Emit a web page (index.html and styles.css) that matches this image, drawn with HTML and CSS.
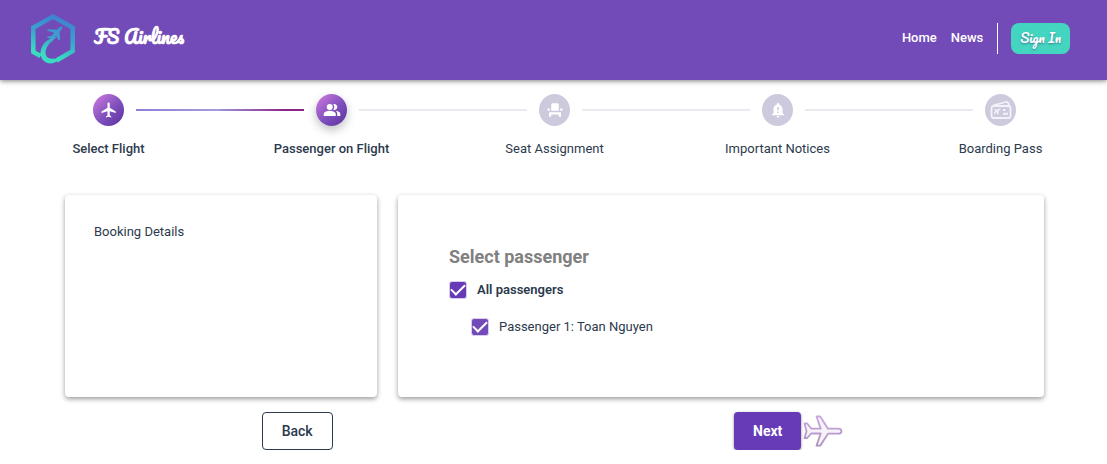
FILE: index.html
```html
<!DOCTYPE html>
<html lang="en">
<head>
<meta charset="utf-8">
<meta name="viewport" content="width=device-width, initial-scale=1">
<title>FS Airlines</title>
<link rel="stylesheet" href="styles.css">
</head>
<body>
<header class="topbar">
  <a class="brand" href="#">
    <svg class="logo" viewBox="0 0 46 52" aria-hidden="true">
      <defs>
        <linearGradient id="logo-fill" gradientUnits="userSpaceOnUse" x1="34" y1="0" x2="18" y2="50">
          <stop offset="0" stop-color="#3f78d4"/>
          <stop offset="0.5" stop-color="#3aa6cc"/>
          <stop offset="0.85" stop-color="#38dcc0"/>
        </linearGradient>
      </defs>
      <path fill="none" stroke="url(#logo-fill)" stroke-width="4.500" d="M10.500 43 3.300 39V14.500L23 3.500l19.700 11V38L26.500 47.500"/>
      <path fill="url(#logo-fill)" d="M29.500 22.500C22 26.500 16 33 15.500 39c-.3 5 3.500 7.500 9 6.500l4 1.500c-4 4-10 4.500-14 1.500-4-3-5-8-3-13.500 2.500-6.500 9-11 18-12.500z"/>
      <path fill="url(#logo-fill)" d="M32 13.500c.8.700.3 2.300-.6 3.300l-1.800 2 .4 7.700-1.300 1-2.300-5.500-3.700 3.300.2 3-1 .7-1.200-3.500-3.700-1.300.9-1 3 .2 3.400-3.600-7.300-2.300 1-1.200 9 .5 2-2c1-1 2.400-1.700 3-1.300z"/>
    </svg>
    <span class="brand-name">FS Airlines</span>
  </a>
  <nav class="nav">
    <a class="nav-link" href="#">Home</a>
    <a class="nav-link" href="#">News</a>
    <span class="divider"></span>
    <button class="sign-in" type="button">Sign In</button>
  </nav>
</header>

<main>
  <ol class="stepper">
    <li class="step done">
      <span class="line line-blank"></span>
      <span class="badge"><svg viewBox="0 0 24 24" aria-hidden="true"><path d="M21 16v-2l-8-5V3.500c0-.83-.67-1.500-1.500-1.500S10 2.670 10 3.500V9l-8 5v2l8-2.500V19l-2 1.500V22l3.500-1 3.500 1v-1.500L13 19v-5.500l8 2.500z"/></svg></span>
      <span class="line line-start"></span>
      <span class="label">Select Flight</span>
    </li>
    <li class="step done current">
      <span class="line line-end"></span>
      <span class="badge"><svg viewBox="0 0 24 24" aria-hidden="true"><path d="M16.670 13.130C18.040 14.060 19 15.320 19 17v3h4v-3c0-2.180-3.570-3.470-6.330-3.870z"/><circle cx="9" cy="8" r="4"/><path d="M15 12c2.210 0 4-1.790 4-4s-1.790-4-4-4c-.47 0-.91.100-1.330.240C14.500 5.270 15 6.580 15 8s-.5 2.730-1.330 3.760c.42.140.86.240 1.330.240zM9 13c-2.670 0-8 1.340-8 4v3h16v-3c0-2.660-5.330-4-8-4z"/></svg></span>
      <span class="line"></span>
      <span class="label">Passenger on Flight</span>
    </li>
    <li class="step">
      <span class="line"></span>
      <span class="badge"><svg viewBox="0 0 24 24" aria-hidden="true"><path d="M4 18v3h3v-3h10v3h3v-6H4v3zm15-8h3v3h-3v-3zM2 10h3v3H2v-3zm15 3H7V5c0-1.100.9-2 2-2h6c1.100 0 2 .9 2 2v8z"/></svg></span>
      <span class="line"></span>
      <span class="label">Seat Assignment</span>
    </li>
    <li class="step">
      <span class="line"></span>
      <span class="badge"><svg viewBox="0 0 24 24" aria-hidden="true"><path fill-rule="evenodd" d="M18 16v-5c0-3.070-1.630-5.640-4.500-6.320V4c0-.83-.67-1.500-1.500-1.500s-1.500.67-1.500 1.500v.68C7.640 5.360 6 7.920 6 11v5l-2 2v1h16v-1l-2-2zm-5 0h-2v-2h2v2zm0-4h-2V8h2v4zm-1 10c1.100 0 2-.9 2-2h-4c0 1.100.89 2 2 2z"/></svg></span>
      <span class="line"></span>
      <span class="label">Important Notices</span>
    </li>
    <li class="step">
      <span class="line"></span>
      <span class="badge"><svg class="pass" viewBox="0 0 24 24" aria-hidden="true"><rect class="outline" x="2.500" y="8" width="19" height="12" rx="2"/><path class="outline" d="M4 7.500 16.500 4c1.500-.4 2.500.2 3 1.500l.6 2.500"/><path d="m5 11.500 1-.5 2 .8 2.500-1.300c1-.3 1.500.4.700 1L9.500 13v3l-1 .8-.9-2.600L5.300 16l-.8-.5 2-2.300zM14 11h2.500v2H14zM14 14.700h5v2h-5z"/></svg></span>
      <span class="line line-blank"></span>
      <span class="label">Boarding Pass</span>
    </li>
  </ol>

  <div class="panels">
    <section class="card booking">Booking Details</section>
    <section class="card passengers">
      <h2 class="title">Select passenger</h2>
      <label class="option all"><input class="check" type="checkbox" checked>All passengers</label>
      <label class="option single"><input class="check" type="checkbox" checked>Passenger 1: Toan Nguyen</label>
    </section>
  </div>

  <div class="actions">
    <button class="btn back" type="button">Back</button>
    <div class="next-group">
      <button class="btn next" type="button">Next</button>
      <svg class="plane" viewBox="0 0 40 32" aria-hidden="true">
        <defs><linearGradient id="plane-line" x1="0" y1="0" x2="0" y2="1"><stop offset="0" stop-color="#c9a8e2"/><stop offset="1" stop-color="#ac92bd"/></linearGradient></defs>
        <path fill="#f6f2f8" stroke="url(#plane-line)" stroke-width="1.800" stroke-linejoin="round" d="M1.500 8.500h2.700l4 5 9.500.1L13.500 1.500h3.700L25 13.700h10c2 0 3.500 1 3.500 2.500s-1.500 2.500-3.500 2.500H25l-7.800 12h-3.700l4.200-12.300-9.500.1-4 4.500H1.500l2-6.500z"/>
      </svg>
    </div>
  </div>
</main>
</body>
</html>
```
FILE: styles.css
```css
* { box-sizing: border-box; }

body {
  margin: 0;
  background: #fff;
  color: #2c3a4d;
  font: 13px/20px Roboto, sans-serif;
  overflow-x: clip;
}

a { color: inherit; text-decoration: none; }
button { font-family: inherit; cursor: pointer; }

.topbar {
  display: flex;
  align-items: center;
  justify-content: space-between;
  height: 80px;
  padding: 0 37px 4px 30px;
  background: #734bb9;
  color: #fff;
  box-shadow: 0 1px 5px rgba(0, 0, 0, .5);
}

.brand { display: flex; align-items: center; gap: 18px; padding-top: 2px; }
.logo { width: 46px; height: 52px; }
.brand-name { padding-bottom: 4px; font: 700 18px/28px Pacifico, cursive; }

.nav { display: flex; align-items: center; gap: 14px; }
.nav-link { font-weight: 500; }
.divider { width: 1px; height: 31px; background: #fff; }
.sign-in {
  height: 31px;
  margin-left: -1px;
  padding: 0 9px;
  border: 0;
  border-radius: 8px;
  background: #43d5c0;
  color: #fff;
  font: 400 13px/20px Pacifico, cursive;
  text-shadow: 0 1px 2px rgba(50, 60, 120, .6);
}

.stepper {
  display: grid;
  grid-template-columns: repeat(5, 1fr);
  margin: 14px -5px 0 -3px;
  padding: 0;
  list-style: none;
}
.step {
  display: grid;
  grid-template-columns: 1fr 31px 1fr;
  align-items: center;
  row-gap: 13px;
}
.badge {
  display: grid;
  place-items: center;
  height: 32px;
  border-radius: 50%;
  background: #cdcadd;
}
.badge svg { width: 18px; height: 18px; fill: #fff; }
.badge .pass { width: 24px; height: 24px; fill: #f4f2f8; }
.outline { fill: none; stroke: #f4f2f8; stroke-width: 1.800; }
.done .badge { background: linear-gradient(136deg, #d57be0 0%, #7e4fbd 55%, #5b309c 100%); }
.current .badge { box-shadow: 0 4px 10px rgba(0, 0, 0, .25); }
.line { height: 2px; background: #eaeaf0; }
.line:first-child { margin-right: 12px; }
.badge + .line { margin-left: 12px; }
.line.line-blank { background: none; }
.line.line-start { background: linear-gradient(90deg, #8a80d8, #a598dc 90%); }
.line.line-end { background: linear-gradient(90deg, #a090d6, #8a2387 80%); }
.label { grid-column: 1 / -1; text-align: center; }
.done .label { font-weight: 500; }

.panels {
  display: grid;
  grid-template-columns: 312fr 646fr;
  gap: 21px;
  margin: 36px 63px 0 65px;
}
.card {
  min-height: 202px;
  border-radius: 4px;
  background: #fff;
  box-shadow: 0 2px 5px rgba(0, 0, 0, .4);
}
.booking { padding: 27px 29px; }
.passengers { padding: 50px 51px; }
.title { margin: 0 0 11px; color: #808080; font-size: 18px; line-height: 24px; font-weight: 700; }
.option { display: flex; align-items: center; gap: 10px; }
.all { font-weight: 600; }
.single { margin: 17px 0 0 22px; }
.check {
  appearance: none;
  width: 18px;
  height: 18px;
  margin: 0;
  border: 1px solid #d8cdee;
  border-radius: 3px;
  background: #673ab7;
  display: grid;
  place-items: center;
}
.check::before {
  content: "";
  width: 12px;
  height: 6px;
  margin-bottom: 4px;
  border: solid #fff;
  border-width: 0 0 2px 2px;
  rotate: -45deg;
}
.single .check { background: #734bb9; }

.actions {
  display: flex;
  justify-content: space-around;
  margin: 15px 63px 0 61px;
}
.next-group { display: flex; align-items: center; gap: 2px; }
.btn {
  height: 38px;
  padding: 0 19px;
  border-radius: 4px;
  font-size: 14px;
  line-height: 18px;
  font-weight: 500;
}
.back { border: 1px solid #2c3a4d; background: #fff; color: #2c3a4d; }
.next { border: 0; background: #673ab7; color: #fff; font-weight: 700; box-shadow: 0 1px 3px rgba(0, 0, 0, .45); }
.plane { width: 40px; height: 32px; }
```
